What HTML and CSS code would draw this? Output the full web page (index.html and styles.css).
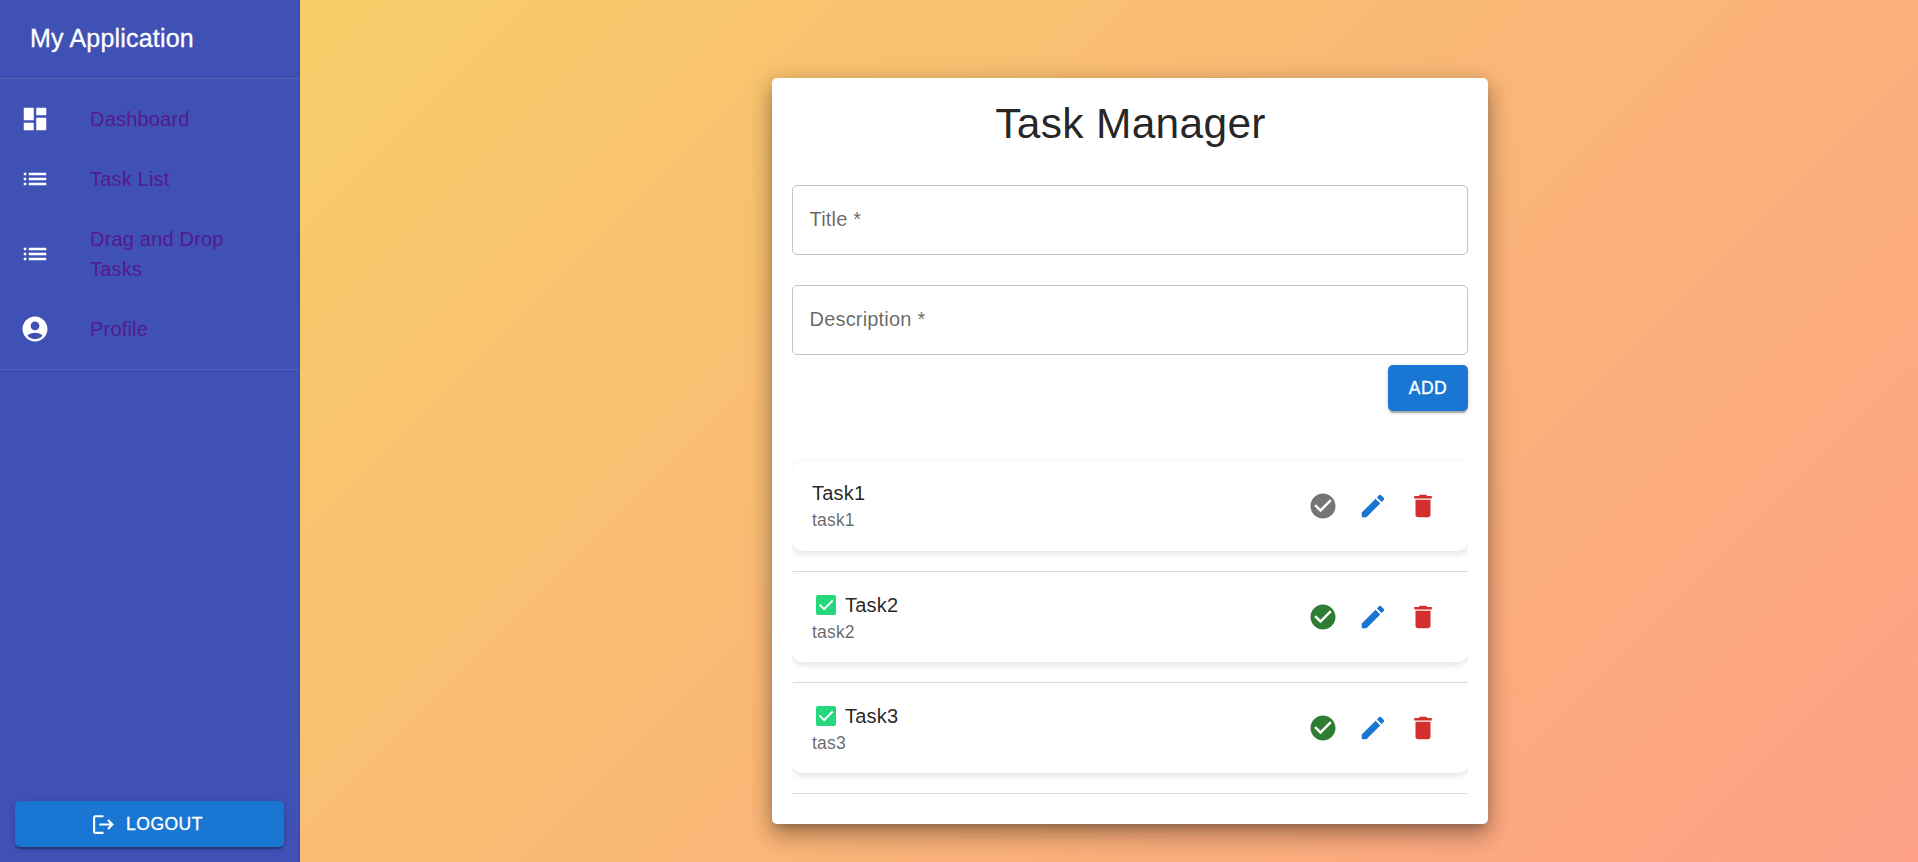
FILE: index.html
```html
<!DOCTYPE html>
<html lang="en">
<head>
<meta charset="utf-8">
<title>Task Manager</title>
<link rel="stylesheet" href="styles.css">
</head>
<body>
<svg class="defs" width="0" height="0" aria-hidden="true">
  <symbol id="list" viewBox="0 0 24 24"><path d="M3 13h2v-2H3v2zm0 4h2v-2H3v2zm0-8h2V7H3v2zm4 4h14v-2H7v2zm0 4h14v-2H7v2zM7 7v2h14V7H7z"/></symbol>
  <symbol id="check" viewBox="0 0 24 24"><path d="M12 2C6.48 2 2 6.48 2 12s4.48 10 10 10 10-4.48 10-10S17.52 2 12 2zm-2 15-5-5 1.41-1.41L10 14.17l7.59-7.59L19 8l-9 9z"/></symbol>
  <symbol id="edit" viewBox="0 0 24 24"><path d="M3 17.25V21h3.75L17.81 9.94l-3.75-3.75L3 17.25zM20.71 7.04c.39-.39.39-1.02 0-1.41l-2.34-2.34a.9959.9959 0 0 0-1.41 0l-1.83 1.83 3.75 3.75 1.83-1.83z"/></symbol>
  <symbol id="delete" viewBox="0 0 24 24"><path d="M6 19c0 1.1.9 2 2 2h8c1.1 0 2-.9 2-2V7H6v12zM19 4h-3.5l-1-1h-5l-1 1H5v2h14V4z"/></symbol>
  <symbol id="done" viewBox="0 0 28 30"><rect x="4" y="5" width="20" height="20" rx="2" fill="#26d87d"/><path d="M7.500 14.600l4.600 4.600 8.600-8.700" fill="none" stroke="#fff" stroke-width="1.900"/></symbol>
</svg>
<div class="app">
  <aside class="sidebar">
    <div class="brand">My Application</div>
    <nav class="nav">
      <a class="nav-item"><svg class="icon" viewBox="0 0 24 24"><path d="M3 13h8V3H3v10zm0 8h8v-6H3v6zm10 0h8V11h-8v10zm0-18v6h8V3h-8z"/></svg><span>Dashboard</span></a>
      <a class="nav-item"><svg class="icon"><use href="#list"/></svg><span>Task List</span></a>
      <a class="nav-item"><svg class="icon"><use href="#list"/></svg><span>Drag and Drop Tasks</span></a>
      <a class="nav-item"><svg class="icon" viewBox="0 0 24 24"><path d="M12 2C6.48 2 2 6.48 2 12s4.48 10 10 10 10-4.48 10-10S17.52 2 12 2zm0 4c1.93 0 3.5 1.57 3.5 3.5S13.93 13 12 13s-3.5-1.57-3.5-3.5S10.07 6 12 6zm0 14c-2.03 0-4.43-.82-6.14-2.88C7.55 15.8 9.68 15 12 15s4.45.8 6.14 2.12C16.43 19.18 14.03 20 12 20z"/></svg><span>Profile</span></a>
    </nav>
    <button class="button logout"><svg viewBox="0 0 24 24"><path d="m17 7-1.410 1.410L18.170 11H8v2h10.170l-2.580 2.580L17 17l5-5zM4 5h8V3H4c-1.100 0-2 .9-2 2v14c0 1.100.9 2 2 2h8v-2H4V5z"/></svg>LOGOUT</button>
  </aside>
  <main class="main">
    <section class="card">
      <h1 class="title">Task Manager</h1>
      <div class="field">Title *</div>
      <div class="field">Description *</div>
      <button class="button add">ADD</button>
      <ul class="tasks">
        <li class="row"><div class="task">
          <div class="text"><div class="name">Task1</div><div class="detail">task1</div></div>
          <div class="actions"><svg class="icon pending"><use href="#check"/></svg><svg class="icon edit"><use href="#edit"/></svg><svg class="icon delete"><use href="#delete"/></svg></div>
        </div></li>
        <li class="row"><div class="task">
          <div class="text"><div class="name"><svg class="done"><use href="#done"/></svg>Task2</div><div class="detail">task2</div></div>
          <div class="actions"><svg class="icon complete"><use href="#check"/></svg><svg class="icon edit"><use href="#edit"/></svg><svg class="icon delete"><use href="#delete"/></svg></div>
        </div></li>
        <li class="row"><div class="task">
          <div class="text"><div class="name"><svg class="done"><use href="#done"/></svg>Task3</div><div class="detail">tas3</div></div>
          <div class="actions"><svg class="icon complete"><use href="#check"/></svg><svg class="icon edit"><use href="#edit"/></svg><svg class="icon delete"><use href="#delete"/></svg></div>
        </div></li>
      </ul>
    </section>
  </main>
</div>
</body>
</html>
```
FILE: styles.css
```css
* { box-sizing: border-box; }
body {
  margin: 0;
  font: 20px/30px "Liberation Sans", Arial, sans-serif;
  letter-spacing: .19px;
  color: rgba(0, 0, 0, .87);
}
.defs { position: absolute; }
.app {
  display: flex;
  height: 862px;
  overflow: hidden;
  background: linear-gradient(135deg, #f6d365 0%, #fda085 100%);
}
.icon { width: 30px; height: 30px; fill: currentColor; flex: none; }

.sidebar {
  width: 300px;
  flex: none;
  display: flex;
  flex-direction: column;
  background: #3f51b5;
  border-right: 1px solid #3846a0;
  color: #fff;
}
.brand {
  height: 79px;
  padding: 18px 30px 0;
  font-size: 25px;
  line-height: 40px;
  -webkit-text-stroke: .3px currentColor;
  border-bottom: 1px solid #5665b0;
}
.nav { padding: 10px 0; border-bottom: 1px solid #5463b8; }
.nav-item {
  display: flex;
  align-items: center;
  gap: 40px;
  padding: 15px 35px 15px 20px;
}
.nav-item span { color: #551a8b; }

.button {
  display: flex;
  align-items: center;
  justify-content: center;
  height: 46px;
  border: 0;
  border-radius: 5px;
  background: #1976d2;
  color: #fff;
  font: 500 17.5px/30px "Liberation Sans", Arial, sans-serif;
  letter-spacing: .5px;
  -webkit-text-stroke: .35px currentColor;
  box-shadow: 0 4px 1px -2px rgba(0, 0, 0, .2), 0 2px 2px rgba(0, 0, 0, .14), 0 1px 6px rgba(0, 0, 0, .12);
}
.logout { margin: auto 15px 15px; gap: 10px; }
.logout svg { width: 25px; height: 25px; margin-left: -5px; fill: currentColor; }

.main {
  flex: 1;
  padding: 78px 0 0 42px;
  display: flex;
  justify-content: center;
  align-items: flex-start;
}
.card {
  width: 716px;
  height: 746px;
  padding: 19px 20px 20px;
  display: flex;
  flex-direction: column;
  background: #fff;
  border-radius: 5px;
  box-shadow: 0 6px 8px -4px rgba(0, 0, 0, .2), 0 15px 21px 1px rgba(0, 0, 0, .14), 0 5px 28px 2px rgba(0, 0, 0, .12), 0 5px 18px rgba(0, 0, 0, .15);
}
.title {
  margin: 0 0 35px;
  font-size: 42.5px;
  line-height: 53px;
  font-weight: 400;
  letter-spacing: .31px;
  text-indent: 1px;
  text-align: center;
}
.field {
  height: 70px;
  margin-bottom: 30px;
  padding: 18px 16.5px;
  border: 1px solid rgba(0, 0, 0, .23);
  border-radius: 5px;
  color: rgba(0, 0, 0, .6);
}
.add { width: 80px; align-self: flex-end; margin-top: -20px; }
.tasks { list-style: none; margin: 40px 0 0; padding: 10px 0 0; overflow: hidden; }
.row { height: 111px; border-bottom: 1px solid rgba(0, 0, 0, .13); }
.task {
  height: 90px;
  padding: 10px 20px;
  display: flex;
  justify-content: space-between;
  align-items: center;
  border-radius: 10px;
  box-shadow: 0 2.5px 6px rgba(0, 0, 0, .11);
}
.row:first-child .text { padding-bottom: 2px; }
.name { display: flex; gap: 5px; }
.done { width: 28px; height: 30px; }
.detail { font-size: 17.5px; line-height: 25px; color: rgba(0, 0, 0, .6); }
.actions { display: flex; gap: 20px; padding-right: 10px; }
.pending { color: #757575; }
.complete { color: #2e7d32; }
.edit { color: #1976d2; }
.delete { color: #d32f2f; }
```
